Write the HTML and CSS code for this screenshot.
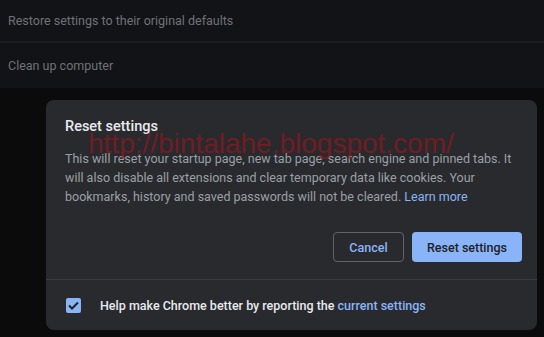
FILE: index.html
```html
<!DOCTYPE html>
<html lang="en">
<head>
    <meta charset="UTF-8">
    <meta name="viewport" content="width=device-width, initial-scale=1.0">
    <title>Reset settings</title>
    <link rel="stylesheet" href="styles.css">
</head>
<body>
    <!-- Settings page behind the dialog -->
    <div class="settings-card">
        <div class="settings-row">Restore settings to their original defaults</div>
        <div class="settings-row">Clean up computer</div>
    </div>

    <!-- Reset dialog -->
    <div class="dialog-area">
        <div class="dialog">
            <div class="dialog-body">
                <h2>Reset settings</h2>
                <p>This will reset your startup page, new tab page, search engine and pinned tabs. It will also disable all extensions and clear temporary data like cookies. Your bookmarks, history and saved passwords will not be cleared. <a href="#">Learn more</a></p>
                <div class="watermark">http://bintalahe.blogspot.com/</div>
            </div>
            <div class="dialog-buttons">
                <button class="btn-cancel">Cancel</button>
                <button class="btn-reset">Reset settings</button>
            </div>
            <div class="dialog-footer">
                <span class="checkbox">
                    <svg width="11" height="9" viewBox="0 0 11 9">
                        <path d="M1 4.5 L4 7.5 L10 1.5" fill="none" stroke="#202124" stroke-width="2"/>
                    </svg>
                </span>
                <span>Help make Chrome better by reporting the <a href="#">current settings</a></span>
            </div>
        </div>
    </div>
</body>
</html>
```

FILE: styles.css
```css
/* Basic Reset */
* {
    margin: 0;
    padding: 0;
    box-sizing: border-box;
}

body {
    font-family: Roboto, 'Liberation Sans', sans-serif;
    background-color: #0b0b0c;
    width: 544px;
    height: 337px;
    overflow: hidden;
}

a {
    color: #8ab4f8;
    text-decoration: none;
}

/* Dimmed settings page */
.settings-card {
    background-color: #121316;
    height: 88px;
}

.settings-row {
    height: 41px;
    padding-left: 8px;
    display: flex;
    align-items: center;
    font-size: 12.5px;
    color: #6f7276;
}

.settings-row + .settings-row {
    height: 47px;
    border-top: 2px solid #1b1c1f;
}

/* Dialog */
.dialog-area {
    padding: 12px 7px 0 46px;
}

.dialog {
    background-color: #292a2d;
    border-radius: 8px;
    height: 230px;
    display: flex;
    flex-direction: column;
}

.dialog-body {
    position: relative;
    padding: 17px 20px 0 19px;
}

.dialog-body h2 {
    font-size: 14.5px;
    font-weight: 500;
    color: #e8eaed;
    line-height: 20px;
    margin-bottom: 12px;
}

.dialog-body p {
    font-size: 12.5px;
    line-height: 19px;
    color: #9aa0a6;
}

/* watermark lies over the dialog text */
.watermark {
    position: absolute;
    left: 42px;
    top: 27px;
    font-family: 'Liberation Sans', Arial, sans-serif;
    font-size: 28px;
    line-height: 34px;
    color: rgba(160, 20, 30, 0.62);
    pointer-events: none;
}

.dialog-buttons {
    display: flex;
    justify-content: flex-end;
    gap: 8px;
    padding: 26px 15px 17px 0;
}

.dialog-buttons button {
    height: 30px;
    border-radius: 4px;
    font-family: Roboto, 'Liberation Sans', sans-serif;
    font-size: 12.5px;
    font-weight: 500;
    cursor: pointer;
}

.btn-cancel {
    width: 71px;
    background-color: transparent;
    border: 1px solid #5f6368;
    color: #8ab4f8;
}

.btn-reset {
    width: 110px;
    background-color: #8ab4f8;
    border: none;
    color: #202124;
}

.dialog-footer {
    border-top: 1px solid #3c3d40;
    flex: 1;
    display: flex;
    align-items: center;
    gap: 19px;
    padding-left: 20px;
    font-size: 12.5px;
    font-weight: 500;
    color: #e8eaed;
}

.checkbox {
    width: 15px;
    height: 15px;
    border-radius: 2px;
    background-color: #8ab4f8;
    display: flex;
    align-items: center;
    justify-content: center;
}
```
